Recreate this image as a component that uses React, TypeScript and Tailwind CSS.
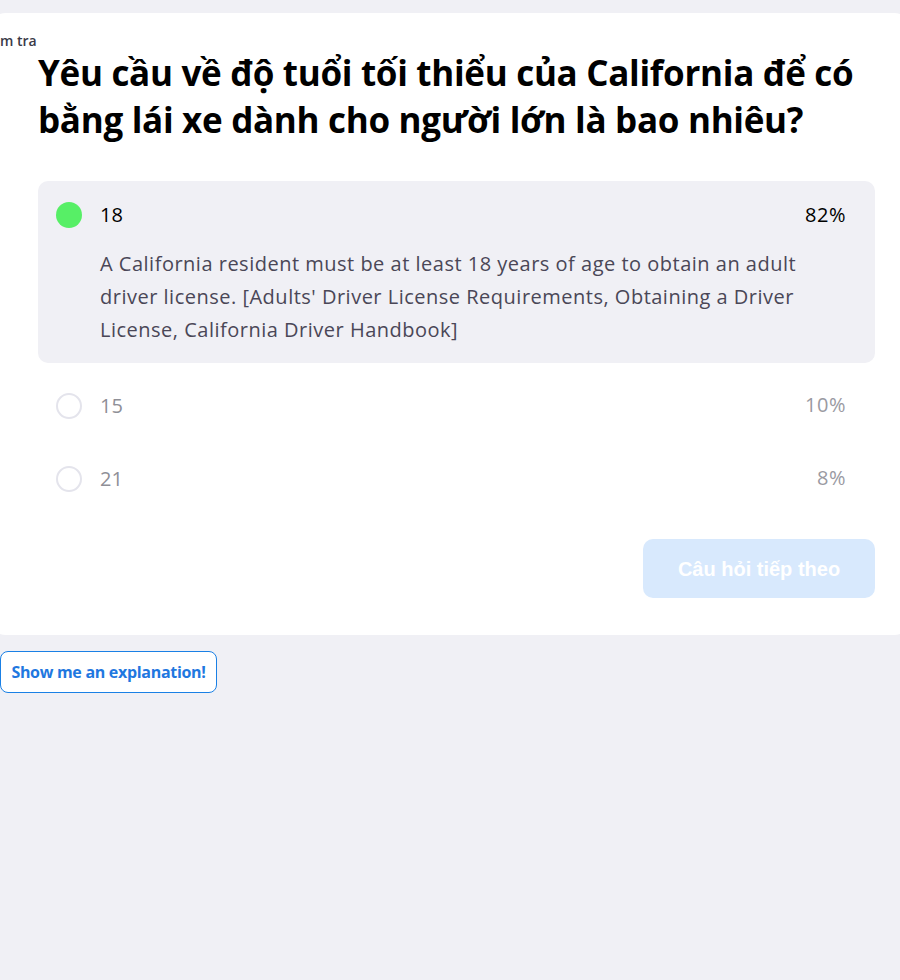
import React from "react";

export default function App() {
  const font = { fontFamily: '"Open Sans", "Noto Sans", sans-serif' };
  return (
    <div className="min-h-[980px] w-[900px] bg-[#f0f0f5] overflow-hidden" style={font}>
      <div className="h-[13px]" />
      <div className="relative bg-white rounded-[16px] w-[920px] h-[622px] -ml-[10px] pl-[48px] pr-[35px]">
        <div className="absolute left-[10px] top-[18px] text-[14px] font-semibold text-[#3a3a48] whitespace-nowrap leading-[20px]">
          m tra
        </div>
        <div className="pt-[36px]">
          <h1 className="text-[35px] leading-[47px] font-bold text-black tracking-[-0.3px]">
            Yêu cầu về độ tuổi tối thiểu của California để có bằng lái xe dành cho người lớn là bao nhiêu?
          </h1>
        </div>
        <div className="mt-[38px] flex flex-col">
          <div className="bg-[#f0f0f5] rounded-[10px] pl-[18px] pr-[29px] pt-[19px] pb-[17px]">
            <div className="flex items-center">
              <div className="w-[26px] h-[26px] rounded-full bg-[#57ef66]" />
              <div className="ml-[18px] text-[20px] text-black flex-1">18</div>
              <div className="text-[20px] text-black tracking-[0.5px]">82%</div>
            </div>
            <p className="ml-[44px] mt-[17px] text-[20px] leading-[33px] text-[#4a4757] pr-[30px] tracking-[0.5px]">
              A California resident must be at least 18 years of age to obtain an adult driver license. [Adults' Driver License Requirements, Obtaining a Driver License, California Driver Handbook]
            </p>
          </div>
          <div className="flex items-center pl-[18px] pr-[29px] mt-[28px]">
            <div className="w-[26px] h-[26px] rounded-full border-2 border-[#e4e4ec]" />
            <div className="ml-[18px] text-[20px] text-[#8f8f97] flex-1">15</div>
            <div className="text-[20px] text-[#9a9aa2] -mt-[2px] tracking-[0.5px]">10%</div>
          </div>
          <div className="flex items-center pl-[18px] pr-[29px] mt-[43px]">
            <div className="w-[26px] h-[26px] rounded-full border-2 border-[#e4e4ec]" />
            <div className="ml-[18px] text-[20px] text-[#8f8f97] flex-1">21</div>
            <div className="text-[20px] text-[#9a9aa2] -mt-[2px] tracking-[0.5px]">8%</div>
          </div>
        </div>
        <div className="flex justify-end mt-[45px]">
          <button
            className="w-[232px] h-[59px] rounded-[10px] bg-[#d8e9fd] text-white text-[20px] font-bold"
            style={{ fontFamily: '"Liberation Sans", Arial, sans-serif' }}
          >
            Câu hỏi tiếp theo
          </button>
        </div>
      </div>
      <div className="mt-[16px]">
        <button className="h-[42px] w-[217px] rounded-[8px] border border-[#1a80e5] bg-white text-[#1f78e0] text-[16px] font-bold tracking-[-0.3px]">
          Show me an explanation!
        </button>
      </div>
    </div>
  );
}
